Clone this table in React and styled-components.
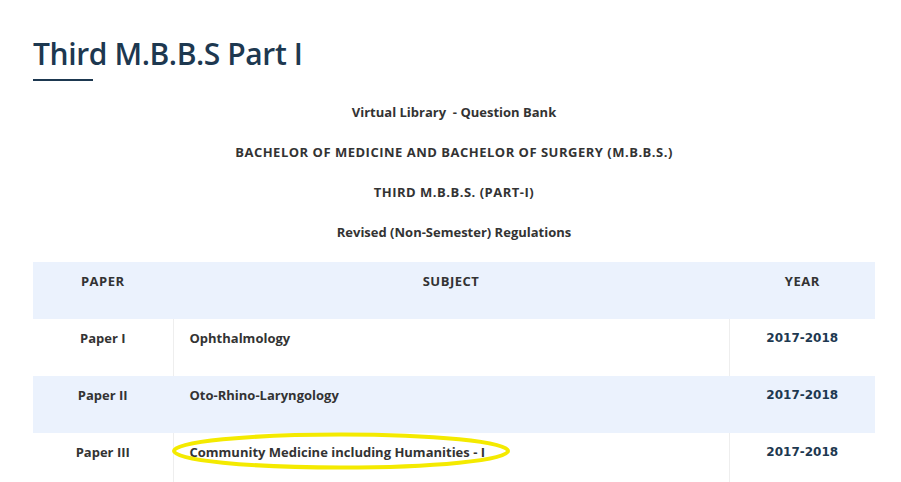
import React from "react";
import styled, { createGlobalStyle } from "styled-components";

const GlobalStyle = createGlobalStyle`
  html, body {
    margin: 0;
    padding: 0;
    background: #fff;
  }
  body {
    font-family: "Open Sans", "Liberation Sans", sans-serif;
    color: #333;
  }
`;

const Page = styled.div`
  width: 842px;
  padding: 34px 0 0 33px;
`;

const Title = styled.h1`
  margin: 0;
  font-family: "Open Sans", sans-serif;
  font-weight: 600;
  font-size: 30px;
  line-height: 40px;
  color: #1d3850;
  letter-spacing: -0.4px;
`;

const TitleRule = styled.div`
  width: 60px;
  height: 2px;
  background: #1d3850;
  margin-top: 5px;
`;

const Intro = styled.div`
  display: flex;
  flex-direction: column;
  align-items: center;
  gap: 22px;
  margin-top: 22px;
`;

const IntroLine = styled.p`
  margin: 0;
  font-size: 13px;
  line-height: 18px;
  font-weight: 700;
  color: #333;
  letter-spacing: ${({ $caps }) => ($caps ? "0.5px" : "0")};
`;

const Table = styled.table`
  width: 100%;
  margin-top: 21px;
  border-collapse: collapse;
  table-layout: fixed;
`;

const Row = styled.tr`
  background: ${({ $shade }) => ($shade ? "#ebf2fd" : "#fff")};
`;

const Cell = styled.td`
  height: 57px;
  box-sizing: border-box;
  padding: 10px 16px 0;
  vertical-align: top;
  text-align: ${({ $align }) => $align || "left"};
  font-size: 13px;
  line-height: 18px;
  font-weight: 700;
  color: #333;
  border-left: 1px solid ${({ $shade }) => ($shade ? "#ebf2fd" : "#eeeeee")};
  &:first-child {
    border-left: none;
  }
`;

const HeadCell = styled(Cell).attrs({ as: "th" })`
  letter-spacing: 0.5px;
`;

const YearCell = styled(Cell)`
  font-family: "DejaVu Sans", Verdana, sans-serif;
  font-size: 12px;
  color: #1d3850;
`;

const SubjectWrap = styled.span`
  position: relative;
  display: inline-block;
`;

const Ring = styled.svg`
  position: absolute;
  left: -18px;
  top: -11px;
  pointer-events: none;
  overflow: visible;
`;

const papers = [
  { paper: "Paper I", subject: "Ophthalmology", year: "2017-2018" },
  { paper: "Paper II", subject: "Oto-Rhino-Laryngology", year: "2017-2018" },
  {
    paper: "Paper III",
    subject: "Community Medicine including Humanities - I",
    year: "2017-2018",
    marked: true,
  },
];

export default function App() {
  return (
    <>
      <GlobalStyle />
      <Page>
        <Title>Third M.B.B.S Part I</Title>
        <TitleRule />
        <Intro>
          <IntroLine>Virtual Library&nbsp; - Question Bank</IntroLine>
          <IntroLine $caps>
            BACHELOR OF MEDICINE AND BACHELOR OF SURGERY (M.B.B.S.)
          </IntroLine>
          <IntroLine $caps>THIRD M.B.B.S. (PART-I)</IntroLine>
          <IntroLine>Revised (Non-Semester) Regulations</IntroLine>
        </Intro>
        <Table>
          <colgroup>
            <col style={{ width: 140 }} />
            <col />
            <col style={{ width: 146 }} />
          </colgroup>
          <thead>
            <Row $shade>
              <HeadCell $shade $align="center">PAPER</HeadCell>
              <HeadCell $shade $align="center">SUBJECT</HeadCell>
              <HeadCell $shade $align="center">YEAR</HeadCell>
            </Row>
          </thead>
          <tbody>
            {papers.map((p, i) => {
              const shade = i % 2 === 1;
              return (
                <Row key={p.paper} $shade={shade}>
                  <Cell $shade={shade} $align="center">{p.paper}</Cell>
                  <Cell $shade={shade}>
                    {p.marked ? (
                      <SubjectWrap>
                        {p.subject}
                        <Ring width="338" height="38" viewBox="0 0 338 38">
                          <ellipse
                            cx="169"
                            cy="19"
                            rx="167"
                            ry="16.5"
                            fill="none"
                            stroke="#f4ea00"
                            strokeWidth="4"
                          />
                        </Ring>
                      </SubjectWrap>
                    ) : (
                      p.subject
                    )}
                  </Cell>
                  <YearCell $shade={shade} $align="center">{p.year}</YearCell>
                </Row>
              );
            })}
          </tbody>
        </Table>
      </Page>
    </>
  );
}
